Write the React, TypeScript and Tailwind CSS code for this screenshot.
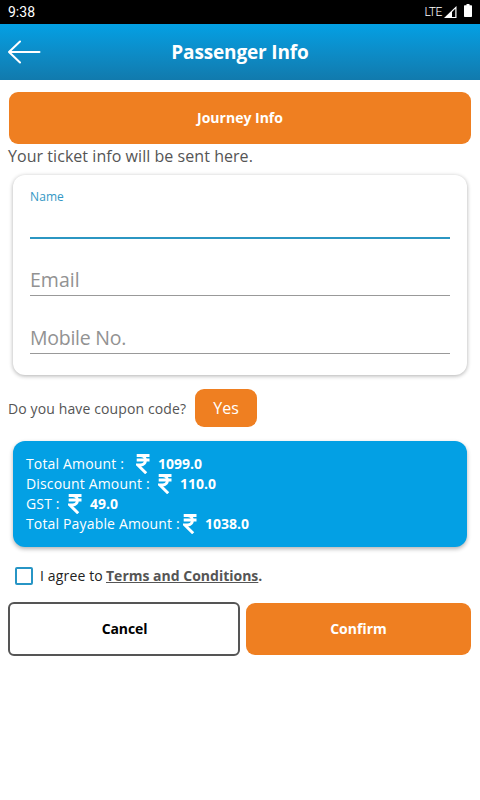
import type { ReactNode } from "react";

function Rupee() {
  return (
    <svg width="14" height="20" viewBox="0 0 14 20" className="shrink-0" fill="none" stroke="#fff">
      <path d="M0.7 1.5H13.5M0.7 6H13.5" strokeWidth="2.8" />
      <path d="M1 1.5H4.5C11 1.5 11 11 4.5 11H1.8L10.2 19.2" strokeWidth="3" />
    </svg>
  );
}

function AmountRow({ label, labelClass, value }: { label: string; labelClass: string; value: string }) {
  return (
    <div className="flex h-5 items-center">
      <span className={`whitespace-nowrap tracking-[0.16px] ${labelClass}`}>{label}</span>
      <Rupee />
      <span className="ml-2 font-bold">{value}</span>
    </div>
  );
}

function Field({ children }: { children: ReactNode }) {
  return (
    <div className="flex h-[58px] items-end border-b border-[#999] pb-[2px] leading-[26px] text-[#929292]">
      {children}
    </div>
  );
}

export default function App() {
  return (
    <div className="flex h-[800px] w-[480px] flex-col overflow-hidden bg-white font-['Open_Sans',sans-serif] text-[14px] leading-5 text-[#555]">
      <div className="flex h-6 shrink-0 items-center bg-black pl-2 pr-2 font-['Roboto',sans-serif] text-white">
        <span className="text-[14px]">9:38</span>
        <span className="ml-auto text-[12px] font-light tracking-[-0.4px]">LTE</span>
        <svg width="13" height="12" viewBox="0 0 13 12" className="ml-[2px]">
          <path d="M0 12L12.5 0V12Z" fill="#fff" />
          <path d="M8 6V11H11.3V2.8Z" fill="#000" />
        </svg>
        <svg width="8" height="13" viewBox="0 0 8 13" className="mb-[3px] ml-[7px]">
          <path d="M2.5 0H5.5V1.3H7.3Q8 1.3 8 2V12.3Q8 13 7.3 13H0.7Q0 13 0 12.3V2Q0 1.3 0.7 1.3H2.5Z" fill="#fff" />
        </svg>
      </div>

      <header className="grid h-14 shrink-0 grid-cols-[48px_1fr_48px] items-center bg-gradient-to-b from-[#03a0e4] to-[#117aad]">
        <svg width="33" height="24" viewBox="0 0 33 24" className="ml-2" fill="none" stroke="#fff" strokeWidth="2" strokeLinecap="round" strokeLinejoin="round">
          <path d="M31.5 12H1M12 1.5L1 12L12 22.5" />
        </svg>
        <h1 className="text-center text-[19px] font-bold tracking-[-0.15px] text-white">Passenger Info</h1>
      </header>

      <button className="ml-[9px] mt-3 h-[52px] w-[462px] shrink-0 rounded-[9px] bg-[#ef7f21] font-bold text-white">
        Journey Info
      </button>

      <p className="mt-[1px] pl-2 text-[16px] leading-[22px] tracking-[0.05px]">Your ticket info will be sent here.</p>

      <section className="mx-[13px] mt-2 h-[200px] shrink-0 rounded-[12px] bg-white px-[17px] pt-[13px] shadow-[0_1px_4px_rgba(0,0,0,0.32)]">
        <div className="h-[51px] border-b-2 border-[#2b96c2] text-[12px] leading-[17px] tracking-[0.1px] text-[#3498c5]">Name</div>
        <div className="-mt-px">
          <Field><span className="text-[19.5px]">Email</span></Field>
          <Field><span className="text-[19.5px] tracking-[-0.25px]">Mobile No.</span></Field>
        </div>
      </section>

      <div className="mt-[14px] flex h-[38px] shrink-0 items-center pl-2">
        <span className="w-[187px] whitespace-nowrap pt-[2px] tracking-[0.12px]">Do you have coupon code?</span>
        <button className="h-[38px] w-[62px] rounded-[9px] bg-[#ef7f21] text-[16px] text-white">Yes</button>
      </div>

      <section className="mx-[13px] mt-[14px] h-[106px] shrink-0 rounded-[12px] bg-[#03a0e4] px-[13px] pt-[13px] text-white shadow-[0_2px_4px_rgba(0,0,0,0.3)]">
        <AmountRow label="Total Amount :" labelClass="w-[110px]" value="1099.0" />
        <AmountRow label="Discount Amount :" labelClass="w-[132px]" value="110.0" />
        <AmountRow label="GST :" labelClass="w-[42px]" value="49.0" />
        <AmountRow label="Total Payable Amount :" labelClass="w-[157px]" value="1038.0" />
      </section>

      <div className="mt-[19px] flex h-5 shrink-0 items-center pl-[15px]">
        <span className="size-[18px] rounded-[2px] border-2 border-[#2795c5]" />
        <span className="ml-[7px] w-[66px] whitespace-nowrap tracking-[0.15px] text-[#222]">I agree to</span>
        <span className="font-bold">
          <span className="underline">Terms and Conditions</span>.
        </span>
      </div>

      <div className="mt-4 flex shrink-0 items-center gap-[6px] pl-2 font-bold">
        <button className="h-[54px] w-[232px] rounded-[6px] border-2 border-[#555] bg-white pl-px tracking-[-0.1px] text-black">Cancel</button>
        <button className="h-[52px] w-[225px] rounded-[9px] bg-[#ef7f21] text-white">Confirm</button>
      </div>
    </div>
  );
}
